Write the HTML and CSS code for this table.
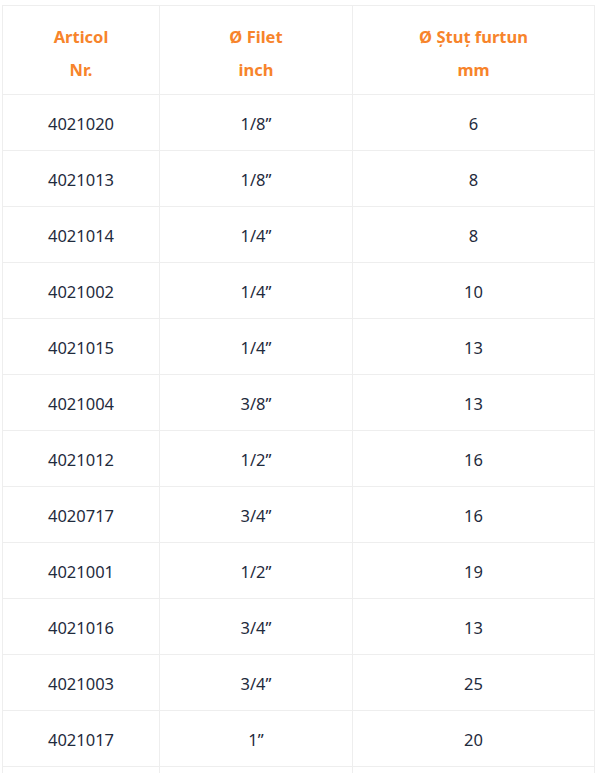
FILE: index.html
```html
<!DOCTYPE html>
<html lang="ro">
<head>
<meta charset="utf-8">
<link rel="stylesheet" href="styles.css">
</head>
<body>
<div class="wrap">
<table class="spec">
  <colgroup>
    <col class="c1"><col class="c2"><col class="c3">
  </colgroup>
  <thead>
    <tr><th>Articol<br>Nr.</th><th>Ø Filet<br>inch</th><th>Ø Ștuț furtun<br>mm</th></tr>
  </thead>
  <tbody>
    <tr><td>4021020</td><td>1/8”</td><td>6</td></tr>
    <tr><td>4021013</td><td>1/8”</td><td>8</td></tr>
    <tr><td>4021014</td><td>1/4”</td><td>8</td></tr>
    <tr><td>4021002</td><td>1/4”</td><td>10</td></tr>
    <tr><td>4021015</td><td>1/4”</td><td>13</td></tr>
    <tr><td>4021004</td><td>3/8”</td><td>13</td></tr>
    <tr><td>4021012</td><td>1/2”</td><td>16</td></tr>
    <tr><td>4020717</td><td>3/4”</td><td>16</td></tr>
    <tr><td>4021001</td><td>1/2”</td><td>19</td></tr>
    <tr><td>4021016</td><td>3/4”</td><td>13</td></tr>
    <tr><td>4021003</td><td>3/4”</td><td>25</td></tr>
    <tr><td>4021017</td><td>1”</td><td>20</td></tr>
    <tr><td>4021018</td><td>1”</td><td>25</td></tr>
  </tbody>
</table>
</div>
</body>
</html>
```
FILE: styles.css
```css
html, body {
  margin: 0;
  padding: 0;
  background: #fff;
}
.wrap {
  padding: 5px 3px 0 2px;
}
.spec {
  width: 592px;
  border-collapse: collapse;
  table-layout: fixed;
  font-family: "Noto Sans", "Open Sans", sans-serif;
  font-size: 16.5px;
  color: #1f2b3d;
}
.c1 { width: 157px; }
.c2 { width: 193px; }
.c3 { width: 242px; }
.spec th,
.spec td {
  border: 1px solid #eeeeee;
  text-align: center;
  padding: 0;
  vertical-align: middle;
}
.spec th {
  color: #f7842b;
  font-weight: 700;
  line-height: 33px;
  height: 82px;
  padding-top: 6px;
}
.spec td {
  height: 53px;
  padding-top: 2px;
  line-height: 24px;
}
```
